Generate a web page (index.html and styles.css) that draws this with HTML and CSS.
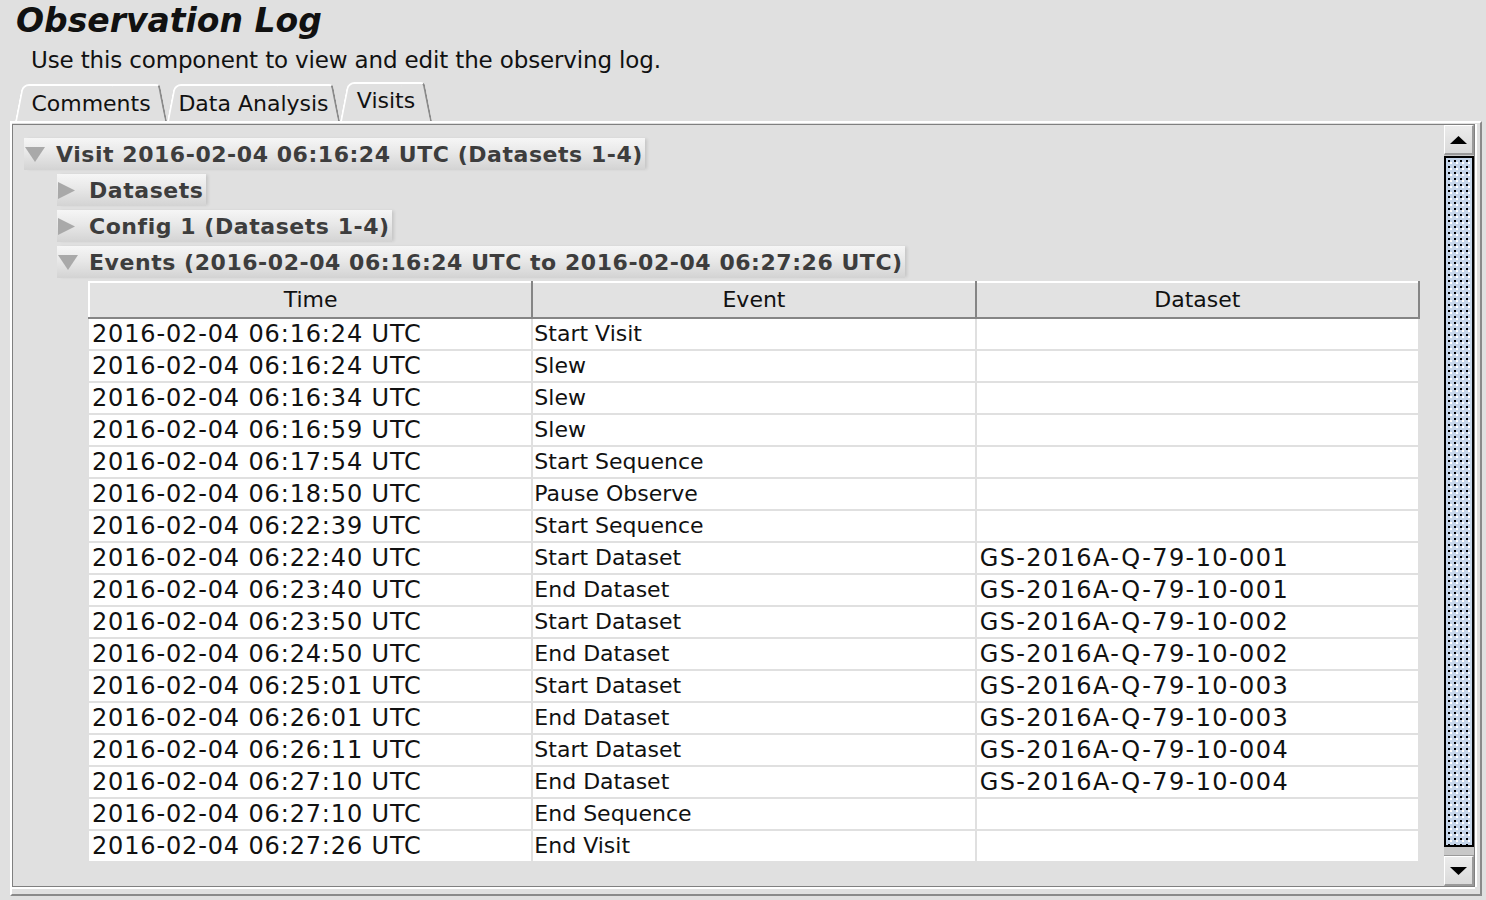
FILE: index.html
```html
<!DOCTYPE html>
<html>
<head>
<meta charset="utf-8">
<title>Observation Log</title>
<link rel="stylesheet" href="styles.css">
</head>
<body>
<h1 class="title">Observation Log</h1>
<p class="subtitle">Use this component to view and edit the observing log.</p>
<div class="tabs">
  <div class="tab tab-comments">Comments</div>
  <div class="tab tab-analysis">Data Analysis</div>
  <div class="tab tab-visits selected">Visits</div>
</div>
<div class="panel">
  <div class="scrollpane">
    <div class="content">
      <div class="node-label">
        <span class="twisty"><svg width="20" height="15" viewBox="0 0 20 15"><polygon points="0,0 20,0 10,15" fill="#a9a9a9"/></svg></span>
        <span class="label-text">Visit 2016-02-04 06:16:24 UTC (Datasets 1-4)</span>
      </div>
      <div class="children">
        <div class="node-label">
          <span class="twisty"><svg width="17" height="17" viewBox="0 0 17 17"><polygon points="0,0 17,8.5 0,17" fill="#a9a9a9"/></svg></span>
          <span class="label-text">Datasets</span>
        </div>
        <div class="node-label">
          <span class="twisty"><svg width="17" height="17" viewBox="0 0 17 17"><polygon points="0,0 17,8.5 0,17" fill="#a9a9a9"/></svg></span>
          <span class="label-text">Config 1 (Datasets 1-4)</span>
        </div>
        <div class="node-label">
          <span class="twisty"><svg width="20" height="15" viewBox="0 0 20 15"><polygon points="0,0 20,0 10,15" fill="#a9a9a9"/></svg></span>
          <span class="label-text">Events (2016-02-04 06:16:24 UTC to 2016-02-04 06:27:26 UTC)</span>
        </div>
        <table class="events">
          <thead>
            <tr><th>Time</th><th>Event</th><th>Dataset</th></tr>
          </thead>
          <tbody>
            <tr><td class="c-time">2016-02-04 06:16:24 UTC</td><td class="c-event">Start Visit</td><td class="c-ds"></td></tr>
            <tr><td class="c-time">2016-02-04 06:16:24 UTC</td><td class="c-event">Slew</td><td class="c-ds"></td></tr>
            <tr><td class="c-time">2016-02-04 06:16:34 UTC</td><td class="c-event">Slew</td><td class="c-ds"></td></tr>
            <tr><td class="c-time">2016-02-04 06:16:59 UTC</td><td class="c-event">Slew</td><td class="c-ds"></td></tr>
            <tr><td class="c-time">2016-02-04 06:17:54 UTC</td><td class="c-event">Start Sequence</td><td class="c-ds"></td></tr>
            <tr><td class="c-time">2016-02-04 06:18:50 UTC</td><td class="c-event">Pause Observe</td><td class="c-ds"></td></tr>
            <tr><td class="c-time">2016-02-04 06:22:39 UTC</td><td class="c-event">Start Sequence</td><td class="c-ds"></td></tr>
            <tr><td class="c-time">2016-02-04 06:22:40 UTC</td><td class="c-event">Start Dataset</td><td class="c-ds">GS-2016A-Q-79-10-001</td></tr>
            <tr><td class="c-time">2016-02-04 06:23:40 UTC</td><td class="c-event">End Dataset</td><td class="c-ds">GS-2016A-Q-79-10-001</td></tr>
            <tr><td class="c-time">2016-02-04 06:23:50 UTC</td><td class="c-event">Start Dataset</td><td class="c-ds">GS-2016A-Q-79-10-002</td></tr>
            <tr><td class="c-time">2016-02-04 06:24:50 UTC</td><td class="c-event">End Dataset</td><td class="c-ds">GS-2016A-Q-79-10-002</td></tr>
            <tr><td class="c-time">2016-02-04 06:25:01 UTC</td><td class="c-event">Start Dataset</td><td class="c-ds">GS-2016A-Q-79-10-003</td></tr>
            <tr><td class="c-time">2016-02-04 06:26:01 UTC</td><td class="c-event">End Dataset</td><td class="c-ds">GS-2016A-Q-79-10-003</td></tr>
            <tr><td class="c-time">2016-02-04 06:26:11 UTC</td><td class="c-event">Start Dataset</td><td class="c-ds">GS-2016A-Q-79-10-004</td></tr>
            <tr><td class="c-time">2016-02-04 06:27:10 UTC</td><td class="c-event">End Dataset</td><td class="c-ds">GS-2016A-Q-79-10-004</td></tr>
            <tr><td class="c-time">2016-02-04 06:27:10 UTC</td><td class="c-event">End Sequence</td><td class="c-ds"></td></tr>
            <tr><td class="c-time">2016-02-04 06:27:26 UTC</td><td class="c-event">End Visit</td><td class="c-ds"></td></tr>
          </tbody>
        </table>
      </div>
    </div>
    <div class="scrollbar">
      <div class="sb-btn"><svg width="17" height="8" viewBox="0 0 17 8"><polygon points="8.5,0 17,8 0,8" fill="#000"/></svg></div>
      <div class="sb-track">
        <div class="sb-thumb"></div>
      </div>
      <div class="sb-btn"><svg width="17" height="8" viewBox="0 0 17 8"><polygon points="0,0 17,0 8.5,8" fill="#000"/></svg></div>
    </div>
  </div>
</div>
</body>
</html>
```
FILE: styles.css
```css
html, body {
  margin: 0;
  padding: 0;
}
body {
  background: #e0e0e0;
  font-family: "DejaVu Sans", sans-serif;
  color: #111;
  width: 1486px;
  height: 900px;
  overflow: hidden;
}
.title {
  margin: 0;
  padding-left: 16px;
  font-size: 33px;
  line-height: 42px;
  font-weight: bold;
  font-style: italic;
  color: #111;
}
.subtitle {
  margin: 3px 0 0 0;
  padding-left: 31px;
  font-size: 23px;
  line-height: 30px;
  letter-spacing: -0.15px;
}
.tabs {
  display: flex;
  align-items: flex-end;
  margin-top: 7px;
  padding-left: 15px;
  height: 39px;
}
.tab {
  position: relative;
  height: 37px;
  box-sizing: border-box;
  text-align: center;
  font-size: 22px;
  line-height: 36px;
  padding-top: 2px;
  color: #111;
}
.tab::before,
.tab::after {
  content: "";
  position: absolute;
  top: 0;
  bottom: 0;
  width: 60%;
  border-top: 2px solid #fff;
  box-sizing: border-box;
}
.tab::before {
  left: 0;
  border-left: 2px solid #fff;
  border-top-left-radius: 7px;
  transform: skewX(-11deg);
  transform-origin: bottom left;
}
.tab::after {
  right: 0;
  border-right: 2px solid #8a8a8a;
  border-top-right-radius: 4px;
  transform: skewX(11deg);
  transform-origin: bottom right;
}
.tab-comments { width: 152px; }
.tab-analysis { width: 173px; }
.tab-visits { width: 92px; }
.tab.selected {
  height: 39px;
  line-height: 34px;
}
.panel {
  margin: 0 4px 0 10px;
  height: 775px;
  box-sizing: border-box;
  border-top: 2px solid #fff;
  border-left: 2px solid #fff;
  border-right: 2px solid #8a8a8a;
  border-bottom: 2px solid #8a8a8a;
  padding: 1px 5px 7px 0;
}
.scrollpane {
  height: 763px;
  box-sizing: border-box;
  border: 1px solid #808080;
  box-shadow: 0 2px 0 #fff, 2px 0 0 #fff;
  display: flex;
}
.content {
  flex: 1;
  padding: 13px 0 0 11px;
  overflow: hidden;
}
.node-label {
  display: flex;
  align-items: center;
  width: max-content;
  height: 32px;
  margin-bottom: 4px;
  padding-right: 2px;
  background: linear-gradient(#f6f6f6, #e8e8e8 45%, #d3d3d3);
  box-shadow: 3px 0 3px -1px rgba(0, 0, 0, 0.12);
  font-weight: bold;
  font-size: 22px;
  letter-spacing: 0.55px;
  color: #3d3d3d;
}
.twisty {
  width: 32px;
  height: 32px;
  box-sizing: border-box;
  padding-left: 1px;
  display: flex;
  align-items: center;
}
.children {
  padding-left: 33px;
}
.events {
  margin-left: 31px;
  margin-top: -1px;
  width: 1332px;
  border-collapse: collapse;
  table-layout: fixed;
  font-size: 22px;
  color: #111;
}
.events th {
  height: 36px;
  box-sizing: border-box;
  padding: 0;
  background: #e2e2e2;
  border-top: 2px solid #fff;
  border-left: 2px solid #fff;
  border-right: 2px solid #858585;
  border-bottom: 2px solid #858585;
  font-weight: normal;
  text-align: center;
  line-height: 30px;
}
.events td {
  height: 32px;
  box-sizing: border-box;
  padding: 0 0 0 3px;
  background: #fff;
  border-right: 2px solid #e0e0e0;
  border-bottom: 2px solid #e0e0e0;
  white-space: nowrap;
  line-height: 30px;
}
.c-time {
  font-size: 24px;
  letter-spacing: 0.85px;
}
.c-ds {
  font-size: 24px;
  letter-spacing: 1.4px;
}
.events td.c-event {
  padding-left: 1px;
  letter-spacing: 0;
}
.scrollbar {
  width: 30px;
  display: flex;
  flex-direction: column;
  margin-right: 0;
}
.sb-btn {
  height: 30px;
  box-sizing: border-box;
  display: flex;
  align-items: center;
  justify-content: center;
  background: linear-gradient(#ececec, #dadada);
  border-top: 1px solid #fff;
  border-left: 1px solid #fff;
  border-right: 2px solid #9a9a9a;
  border-bottom: 2px solid #9a9a9a;
}
.sb-track {
  flex: 1;
  display: flex;
  flex-direction: column;
  background: #c8c8c8;
  border-bottom: 1px solid #9a9a9a;
}
.sb-thumb {
  flex: 1;
  margin: 1px 0 8px 0;
  box-sizing: border-box;
  border: 2px solid #000;
  background-color: #c6d6ea;
  background-image:
    radial-gradient(circle, #000 0.9px, transparent 1.3px),
    radial-gradient(circle, #fff 0.9px, transparent 1.3px);
  background-size: 6px 6px, 6px 6px;
  background-position: 0 0, 2px 2px;
}
```
